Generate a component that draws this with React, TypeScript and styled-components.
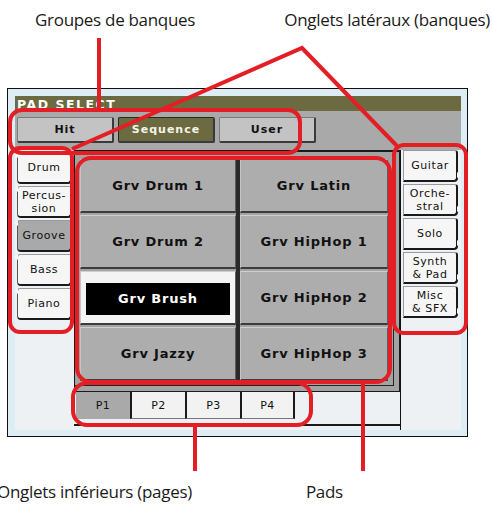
import React from "react";
import styled, { createGlobalStyle } from "styled-components";

const GlobalStyle = createGlobalStyle`
	html, body {
		margin: 0;
		padding: 0;
		background: #ffffff;
	}
`;

const RED = "#e31e25";

const Page = styled.div`
	position: relative;
	width: 492px;
	height: 509px;
	overflow: hidden;
	background: #ffffff;
	font-family: "Open Sans", "Liberation Sans", sans-serif;
`;

const TopLabels = styled.div`
	display: flex;
	justify-content: space-between;
	height: 88px;
	padding: 8px 2px 0 35px;
	box-sizing: border-box;
`;

const Label = styled.div`
	font-size: 17px;
	letter-spacing: -0.3px;
	color: #1a1a1a;
	white-space: nowrap;
	line-height: 24px;
`;

const BottomLabels = styled.div`
	display: flex;
	gap: 114px;
	margin-top: 43px;
	margin-left: -3px;
`;

const Screen = styled.div`
	margin-left: 7px;
	width: 461px;
	height: 349px;
	box-sizing: border-box;
	border: 1px solid #111;
	background: #dcedf4;
	padding: 7px 6px 6px 7px;
	display: flex;
	flex-direction: column;
	font-family: "DejaVu Sans", "Liberation Sans", sans-serif;
`;

const TitleBar = styled.div`
	height: 15px;
	background: #6c6a40;
	color: #ffffff;
	font-weight: bold;
	font-size: 12.5px;
	letter-spacing: 1.5px;
	line-height: 17px;
	padding-left: 2px;
`;

const GroupRow = styled.div`
	height: 39px;
	box-sizing: border-box;
	background: #a9a9a9;
	padding: 6px 0 0 2px;
	display: flex;
	gap: 4px;
	align-items: flex-start;
`;

const GroupTab = styled.div<{ $active?: boolean }>`
	width: 97px;
	height: 26px;
	box-sizing: border-box;
	display: flex;
	align-items: center;
	justify-content: center;
	font-weight: bold;
	font-size: 11px;
	letter-spacing: 1px;
	background: ${(p) => (p.$active ? "#6c6a40" : "#c3c3c3")};
	color: ${(p) => (p.$active ? "#f4f4e8" : "#111")};
	border: 1px solid ${(p) => (p.$active ? "#2a2a1a" : "#7a7a7a")};
	border-bottom: 2px solid #3a3a3a;
	border-right: 2px solid #3a3a3a;
	border-radius: 2px;
`;

const Body = styled.div`
	flex: 1;
	display: flex;
	min-height: 0;
`;

const SideColumn = styled.div<{ $right?: boolean }>`
	width: ${(p) => (p.$right ? "61px" : "59px")};
	box-sizing: border-box;
	background: #eef1f4;
	border-left: ${(p) => (p.$right ? "1px solid #111" : "none")};
	padding: ${(p) => (p.$right ? "0 0 0 2px" : "2px 0 0 2px")};
	display: flex;
	flex-direction: column;
	gap: 2px;
`;

const SideTab = styled.div<{ $active?: boolean; $right?: boolean }>`
	position: relative;
	width: 55px;
	height: 32px;
	box-sizing: border-box;
	display: flex;
	align-items: center;
	justify-content: center;
	text-align: center;
	font-size: 11px;
	letter-spacing: 0.6px;
	line-height: 13px;
	color: #111;
	background: ${(p) => (p.$active ? "#a9a9a9" : "#f6f6f6")};
	border-top: 1px solid #9a9a9a;
	border-left: 1px solid ${(p) => (p.$right ? "#9a9a9a" : "#555")};
	border-right: 2px solid #1a1a1a;
	border-bottom: 2px solid #1a1a1a;
	border-radius: ${(p) => (p.$right ? "0 3px 4px 0" : "3px 0 4px 4px")};

	&::before {
		content: "";
		position: absolute;
		${(p) => (p.$right ? "right: -5px; bottom: 2px;" : "left: -4px; top: -1px;")}
		width: 0;
		height: 0;
		border-top: 3px solid transparent;
		border-bottom: 3px solid transparent;
		${(p) =>
			p.$right
				? "border-left: 4px solid #f6f6f6;"
				: "border-right: 4px solid #f6f6f6;"}
	}
`;

const Center = styled.div`
	flex: 1;
	display: flex;
	flex-direction: column;
	background: #eef1f4;
`;

const PadFrame = styled.div`
	height: 242px;
	box-sizing: border-box;
	background: #a3a3a3;
	border: 1px solid #1a1a1a;
	border-top-width: 2px;
	padding: 7px 10px 10px 5px;
	box-shadow: inset -5px -5px 0 #a3a3a3, inset -6px -6px 0 #222;
`;

const PadGrid = styled.div`
	display: grid;
	grid-template-columns: 156px 148px;
	grid-template-rows: repeat(4, 54px);
	gap: 2px 4px;
	background: linear-gradient(#2a2a2a, #2a2a2a) no-repeat 156px 0 / 4px 100%;
`;

const Pad = styled.div<{ $selected?: boolean }>`
	box-sizing: border-box;
	display: flex;
	align-items: center;
	justify-content: center;
	font-weight: bold;
	font-size: 13px;
	letter-spacing: 0.8px;
	color: #111;
	background: ${(p) => (p.$selected ? "#f4f4f4" : "#adadad")};
	border-top: 1px solid #cfcfcf;
	border-left: 1px solid #c4c4c4;
	border-right: 1px solid #5e5e5e;
	border-bottom: 2px solid #3c3c3c;
`;

const SelectedLabel = styled.div`
	width: 144px;
	height: 32px;
	margin-top: 2px;
	background: #000;
	color: #fff;
	display: flex;
	align-items: center;
	justify-content: center;
`;

const PageRow = styled.div`
	height: 34px;
	box-sizing: border-box;
	display: flex;
	padding-left: 2px;
	border-bottom: 2px solid #1a1a1a;
`;

const PageTab = styled.div<{ $active?: boolean; $last?: boolean }>`
	width: ${(p) => (p.$active ? "54px" : "55px")};
	height: 27px;
	box-sizing: border-box;
	display: flex;
	align-items: center;
	justify-content: center;
	font-size: 11px;
	letter-spacing: 0.5px;
	color: #111;
	background: ${(p) => (p.$active ? "#a9a9a9" : "#f2f2f2")};
	border-left: ${(p) => (p.$active ? "none" : "2px solid #1a1a1a")};
	border-right: ${(p) => (p.$last ? "2px solid #1a1a1a" : "none")};
	border-bottom: ${(p) => (p.$active ? "none" : "1px solid #777")};
`;

const Overlay = styled.svg`
	position: absolute;
	left: 0;
	top: 0;
	pointer-events: none;
`;

const leftBanks = ["Drum", "Percus-\nsion", "Groove", "Bass", "Piano"];
const rightBanks = ["Guitar", "Orche-\nstral", "Solo", "Synth\n& Pad", "Misc\n& SFX"];
const pads = [
	"Grv Drum 1",
	"Grv Latin",
	"Grv Drum 2",
	"Grv HipHop 1",
	"Grv Brush",
	"Grv HipHop 2",
	"Grv Jazzy",
	"Grv HipHop 3",
];

const lines = (text: string) =>
	text.split("\n").map((l, i) => (
		<React.Fragment key={i}>
			{i > 0 && <br />}
			{l}
		</React.Fragment>
	));

export default function App() {
	return (
		<Page>
			<GlobalStyle />
			<TopLabels>
				<Label>Groupes de banques</Label>
				<Label>Onglets latéraux (banques)</Label>
			</TopLabels>

			<Screen>
				<TitleBar>PAD SELECT</TitleBar>
				<GroupRow>
					<GroupTab>Hit</GroupTab>
					<GroupTab $active>Sequence</GroupTab>
					<GroupTab>User</GroupTab>
				</GroupRow>
				<Body>
					<SideColumn>
						{leftBanks.map((b) => (
							<SideTab key={b} $active={b === "Groove"}>
								<span>{lines(b)}</span>
							</SideTab>
						))}
					</SideColumn>
					<Center>
						<PadFrame>
							<PadGrid>
								{pads.map((p) =>
									p === "Grv Brush" ? (
										<Pad key={p} $selected>
											<SelectedLabel>{p}</SelectedLabel>
										</Pad>
									) : (
										<Pad key={p}>{p}</Pad>
									)
								)}
							</PadGrid>
						</PadFrame>
						<PageRow>
							<PageTab $active>P1</PageTab>
							<PageTab>P2</PageTab>
							<PageTab>P3</PageTab>
							<PageTab $last>P4</PageTab>
						</PageRow>
					</Center>
					<SideColumn $right>
						{rightBanks.map((b) => (
							<SideTab key={b} $right>
								<span>{lines(b)}</span>
							</SideTab>
						))}
					</SideColumn>
				</Body>
			</Screen>

			<BottomLabels>
				<Label>Onglets inférieurs (pages)</Label>
				<Label>Pads</Label>
			</BottomLabels>

			<Overlay width="492" height="509" viewBox="0 0 492 509">
				<g fill="none" stroke={RED} strokeWidth="4" strokeLinecap="butt">
					<line x1="99" y1="38" x2="99" y2="110" />
					<polyline points="72,149 302,48 397,146" strokeLinejoin="miter" />
					<line x1="195" y1="425" x2="195" y2="471" />
					<line x1="363" y1="382" x2="363" y2="471" />
					<rect x="10" y="110" width="290" height="43" rx="12" />
					<rect x="10" y="148" width="62" height="184" rx="10" />
					<rect x="394" y="145" width="72" height="188" rx="10" />
					<rect x="77" y="158" width="313" height="224" rx="14" />
					<rect x="73" y="383" width="238" height="42" rx="14" />
				</g>
			</Overlay>
		</Page>
	);
}
